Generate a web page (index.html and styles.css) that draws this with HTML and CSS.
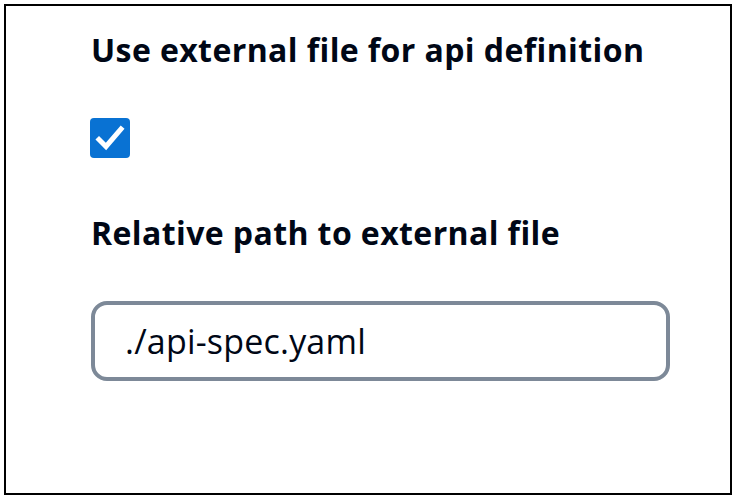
FILE: index.html
```html
<!DOCTYPE html>
<html lang="en">
<head>
<meta charset="utf-8">
<title>API definition settings</title>
<link rel="stylesheet" href="styles.css">
</head>
<body>
  <div class="frame">
    <form class="form">
      <div class="field">
        <label class="field-label" for="use-external">Use external file for api definition</label>
        <span class="checkbox" id="use-external" role="checkbox" aria-checked="true">
          <svg viewBox="0 0 40 40" width="40" height="40" aria-hidden="true">
            <rect x="0" y="0" width="40" height="40" rx="4" fill="#0972d3"/>
            <polyline points="9,21.5 16,28.5 31,11" fill="none" stroke="#ffffff" stroke-width="5" stroke-linecap="square" stroke-linejoin="miter"/>
          </svg>
        </span>
      </div>
      <div class="field">
        <label class="field-label" for="spec-path">Relative path to external file</label>
        <div class="input">./api-spec.yaml</div>
      </div>
    </form>
  </div>
</body>
</html>
```

FILE: styles.css
```css
html, body {
  margin: 0;
  padding: 0;
  background: #ffffff;
}

body {
  font-family: "Open Sans", "Noto Sans", sans-serif;
  color: #000716;
}

.frame {
  box-sizing: border-box;
  margin: 4px 0 0 4px;
  width: 728px;
  height: 491px;
  border: 2px solid #000000;
  padding: 24px 0 0 85px;
}

.form {
  display: flex;
  flex-direction: column;
  gap: 55px;
  width: 579px;
}

.field {
  display: flex;
  flex-direction: column;
  gap: 48px;
}

.field-label {
  font-size: 32px;
  font-weight: 700;
  line-height: 40px;
  letter-spacing: 0.4px;
  white-space: nowrap;
}

.checkbox {
  display: block;
  width: 40px;
  height: 40px;
  margin-left: -1px;
}

.checkbox svg {
  display: block;
}

.input {
  box-sizing: border-box;
  height: 80px;
  border: 4px solid #7d8998;
  border-radius: 16px;
  padding: 0 30px;
  display: flex;
  align-items: center;
  font-size: 34px;
  font-weight: 400;
  letter-spacing: 0.2px;
  color: #000716;
}
```
